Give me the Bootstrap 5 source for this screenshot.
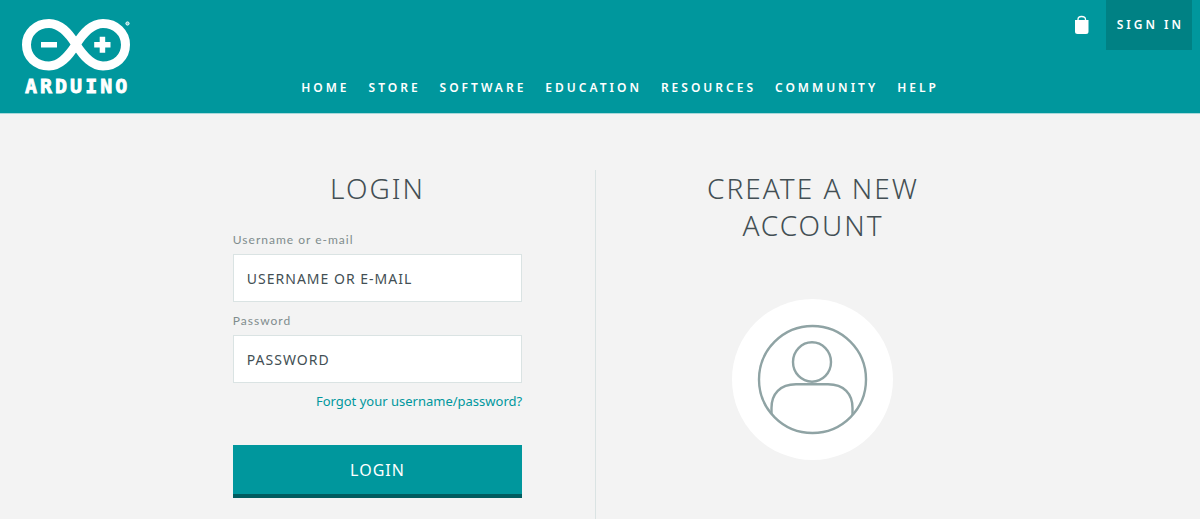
<!DOCTYPE html>
<html lang="en">
<head>
<meta charset="utf-8">
<meta name="viewport" content="width=device-width, initial-scale=1">
<title>Arduino - Login</title>
<link href="https://cdn.jsdelivr.net/npm/bootstrap@5.3.0/dist/css/bootstrap.min.css" rel="stylesheet">
<style>
  :root { --teal: #00979d; --teal-dark: #008184; --ink: #434f54; --line: #dae3e3; }
  body { font-family: "Noto Sans", "Open Sans", sans-serif; background: #f3f3f3; color: var(--ink); }
  .site-header { background: var(--teal); border-bottom: 1px solid #a8d8da; }
  .brand-logo { padding: 12px 0 12px 16px; }
  .tools { gap: 17px; padding-right: 8px; }
  .sign-in { background: var(--teal-dark); padding: 16px 8px 16px 11px; }
  .caps { font-size: 12px; line-height: 18px; font-weight: 600; letter-spacing: 3px; color: #fff; text-decoration: none; }
  .main-menu { column-gap: 19px; padding: 0 96px 16px 0; }
  .login-wrap { padding: 56px 9px 0 0; }
  .login-grid { max-width: 870px; }
  .divided { border-right: 1px solid var(--line); min-height: 349px; }
  .title { font-size: 28px; line-height: 37px; font-weight: 300; letter-spacing: 2px; margin: 0; }
  .field-label { font-family: Lato, "Noto Sans", sans-serif; font-size: 12px; line-height: 18px; letter-spacing: 1px; color: #7f8c8d; margin-bottom: 5px; }
  .field { height: 48px; border: 1px solid var(--line); border-radius: 0; padding: 0 13px; font-size: 14px; letter-spacing: 1px; margin-bottom: 10px; }
  .field::placeholder { color: var(--ink); opacity: 1; }
  .forgot { font-size: 13px; line-height: 16px; color: var(--teal); }
  .login-btn { margin-top: 36px; height: 53px; background: var(--teal); color: #fff; border: 0; border-bottom: 4px solid #005c5f; border-radius: 0; font-size: 16px; letter-spacing: 1px; }
  .login-btn:hover { background: var(--teal-dark); color: #fff; border-color: #005c5f; }
  .avatar { width: 161px; height: 161px; }
  .signup-link { margin-top: 55px; }
</style>
</head>
<body>
<header class="site-header d-flex">
  <a href="#" class="brand-logo flex-shrink-0" aria-label="Arduino">
    <svg class="d-block" width="120" height="89" viewBox="16 12 120 89">
      <path d="M76 44.500C68 32 60 23.500 49 23.500C36 23.500 26.500 33 26.500 44.700C26.500 57 36 66 49 66C60 66 68 57 76 44.500C84 32 92 23.500 103 23.500C116 23.500 125.500 33 125.500 44.700C125.500 57 116 66 103 66C92 66 84 57 76 44.500Z" fill="none" stroke="#fff" stroke-width="9"/>
      <path d="M41 42h16v5.500h-16zM94.200 42h5.500v-5.300h5.500v5.300h5.300v5.500h-5.300v5.300h-5.500v-5.300h-5.500z" fill="#fff"/>
      <circle cx="127.500" cy="23.500" r="1.600" fill="#7fcbce" stroke="#fff" stroke-width="1"/>
      <text x="25" y="93" fill="#fff" stroke="#fff" stroke-width="0.800" font-family="DejaVu Sans Mono, monospace" font-weight="700" font-size="20" letter-spacing="3">ARDUINO</text>
    </svg>
  </a>
  <div class="flex-grow-1 d-flex flex-column justify-content-between">
    <div class="tools d-flex justify-content-end align-items-center">
      <a href="#" aria-label="Cart">
        <svg class="d-block" width="15" height="20" viewBox="0 0 15 20">
          <path d="M4 6V4.500C4 2.300 5.300 1.500 7.500 1.500S11.500 2.300 11.500 4.500V6" fill="none" stroke="#fff" stroke-width="1.300"/>
          <path d="M1 5h13.500v11.500a2.500 2.500 0 0 1-2.500 2.500h-8.500a2.500 2.500 0 0 1-2.500-2.500z" fill="#fff"/>
        </svg>
      </a>
      <a href="#" class="caps sign-in">SIGN IN</a>
    </div>
    <nav class="main-menu d-flex flex-wrap justify-content-center">
      <a class="caps" href="#">HOME</a>
      <a class="caps" href="#">STORE</a>
      <a class="caps" href="#">SOFTWARE</a>
      <a class="caps" href="#">EDUCATION</a>
      <a class="caps" href="#">RESOURCES</a>
      <a class="caps" href="#">COMMUNITY</a>
      <a class="caps" href="#">HELP</a>
    </nav>
  </div>
</header>
<main class="login-wrap">
  <div class="login-grid row g-0 mx-auto">
    <section class="col-6 divided">
      <form class="row g-0 justify-content-center">
        <div class="col-8 d-flex flex-column">
          <h1 class="title text-center mb-4">LOGIN</h1>
          <label class="field-label" for="user">Username or e-mail</label>
          <input class="field form-control" id="user" type="text" placeholder="USERNAME OR E-MAIL">
          <label class="field-label" for="pass">Password</label>
          <input class="field form-control" id="pass" type="password" placeholder="PASSWORD">
          <a class="forgot text-end text-decoration-none" href="#">Forgot your username/password?</a>
          <button class="login-btn btn w-100" type="submit">LOGIN</button>
        </div>
      </form>
    </section>
    <section class="col-6">
      <div class="row g-0 justify-content-center">
        <div class="col-8 d-flex flex-column align-items-center">
          <h2 class="title text-center">CREATE A NEW ACCOUNT</h2>
          <a href="#" class="signup-link" aria-label="Create a new account">
            <svg class="avatar d-block" viewBox="0 0 161 161">
              <circle cx="80.500" cy="80.500" r="80.500" fill="#fff"/>
              <g fill="none" stroke="#8fa3a4" stroke-width="2.400">
                <circle cx="80.500" cy="80.500" r="53.500"/>
                <ellipse cx="80" cy="63" rx="19" ry="19.700"/>
                <path d="M39.500 115V109C39.500 95 48 85.300 64 85.300H96C112 85.300 120.500 95 120.500 109V116"/>
              </g>
            </svg>
          </a>
        </div>
      </div>
    </section>
  </div>
</main>
<script src="https://cdn.jsdelivr.net/npm/bootstrap@5.3.0/dist/js/bootstrap.bundle.min.js"></script>
</body>
</html>
